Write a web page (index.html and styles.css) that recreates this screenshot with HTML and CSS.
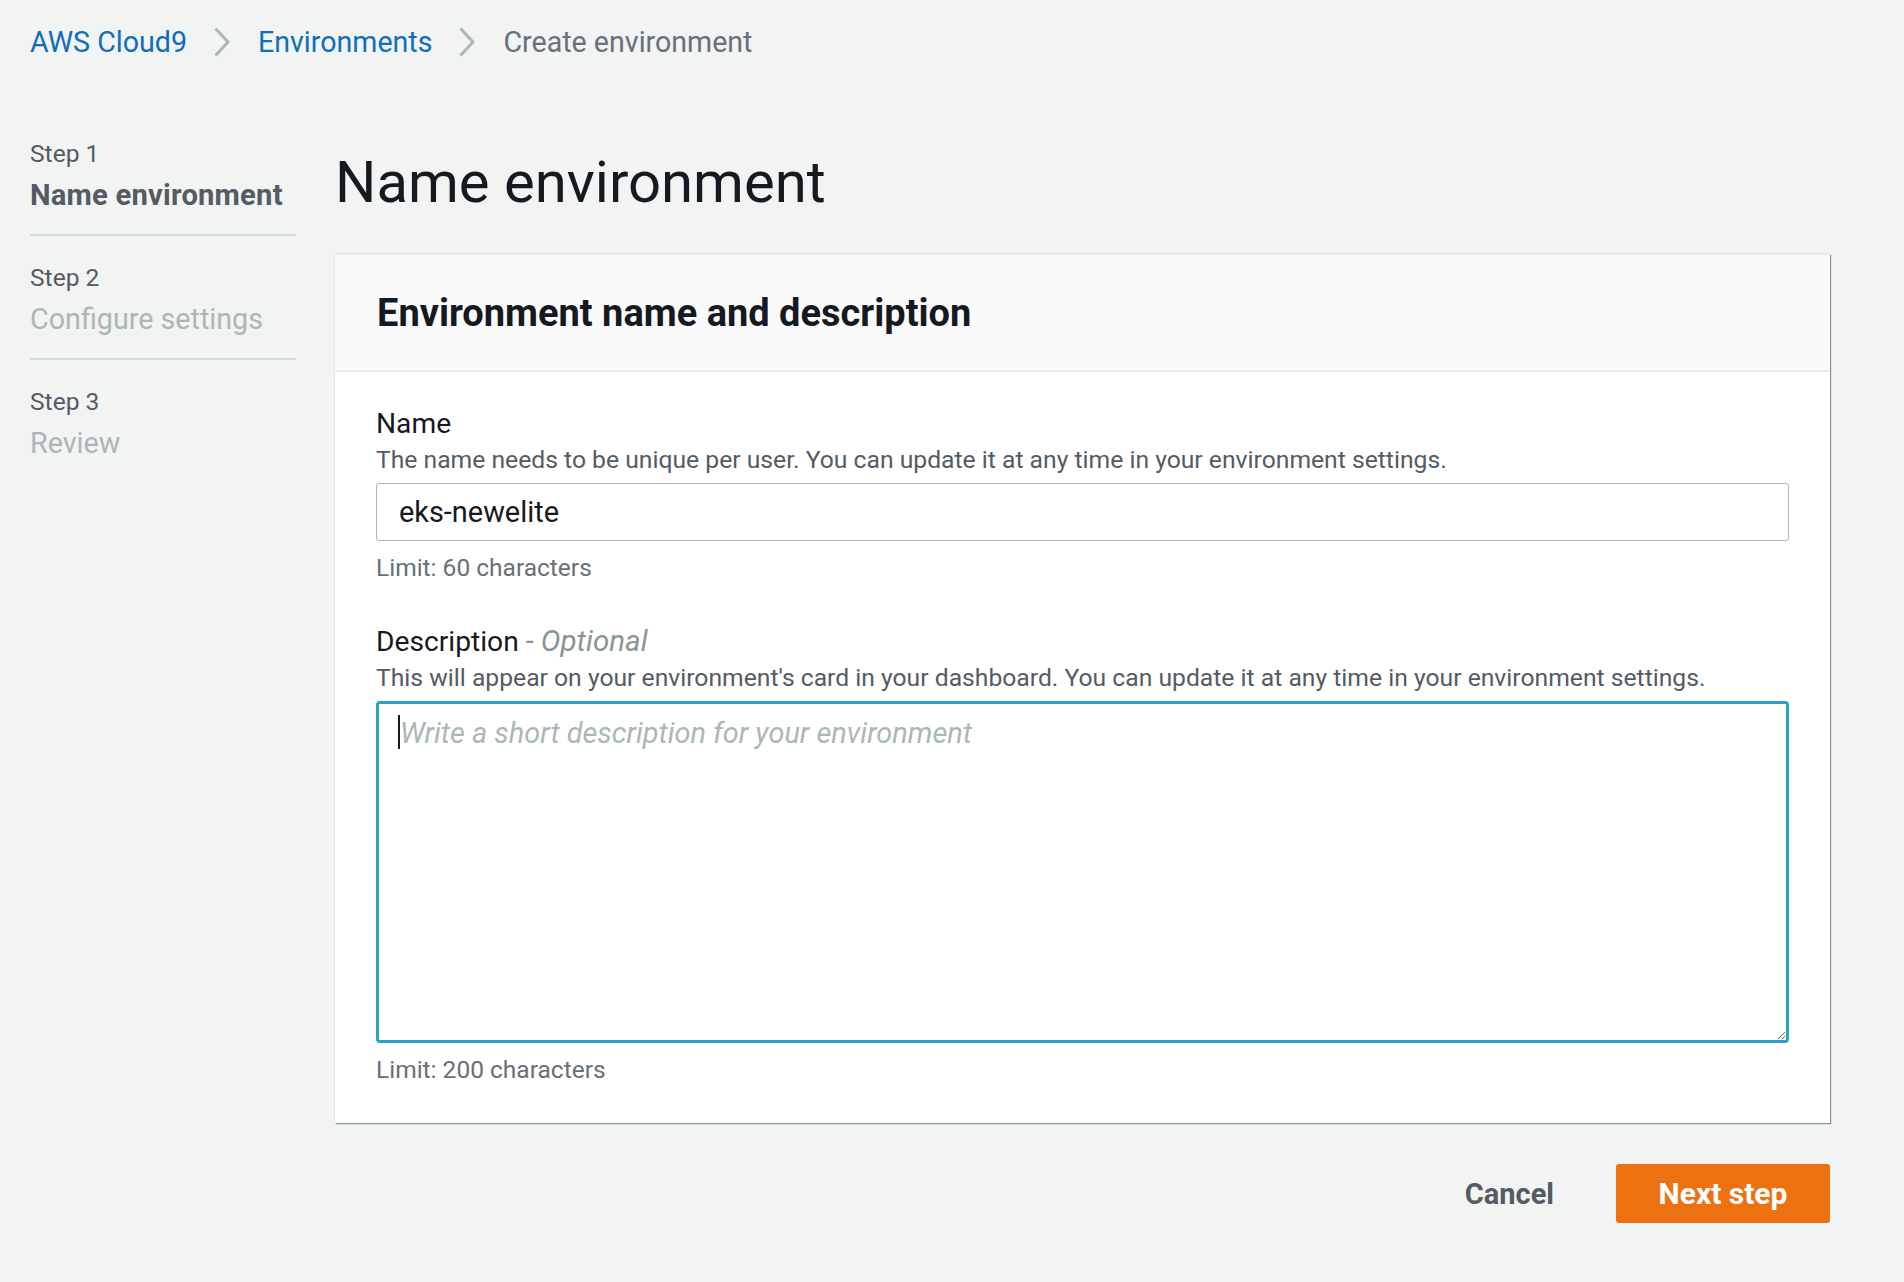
FILE: index.html
```html
<!DOCTYPE html>
<html lang="en">
<head>
<meta charset="utf-8">
<title>Create environment</title>
<link rel="stylesheet" href="styles.css">
</head>
<body>
<nav class="crumbs">
  <a class="crumb-link" href="#">AWS Cloud9</a>
  <svg class="chev" viewBox="0 0 18 30" width="18" height="30"><path d="M2.5 1.5 L15 15 L2.5 28.5" fill="none" stroke="#aab7b8" stroke-width="3"/></svg>
  <a class="crumb-link" href="#">Environments</a>
  <svg class="chev" viewBox="0 0 18 30" width="18" height="30"><path d="M2.5 1.5 L15 15 L2.5 28.5" fill="none" stroke="#aab7b8" stroke-width="3"/></svg>
  <span class="crumb-current">Create environment</span>
</nav>
<div class="layout">
  <aside class="steps">
    <div class="step">
      <div class="step-num">Step 1</div>
      <div class="step-name active">Name environment</div>
    </div>
    <div class="step">
      <div class="step-num">Step 2</div>
      <div class="step-name">Configure settings</div>
    </div>
    <div class="step last">
      <div class="step-num">Step 3</div>
      <div class="step-name">Review</div>
    </div>
  </aside>
  <main class="main">
    <h1 class="title">Name environment</h1>
    <section class="card">
      <div class="card-head">
        <h2 class="card-title">Environment name and description</h2>
      </div>
      <div class="card-body">
        <div class="field">
          <div class="label">Name</div>
          <div class="help">The name needs to be unique per user. You can update it at any time in your environment settings.</div>
          <input class="input" type="text" value="eks-newelite">
          <div class="hint">Limit: 60 characters</div>
        </div>
        <div class="field">
          <div class="label">Description <span class="optional">- Optional</span></div>
          <div class="help">This will appear on your environment's card in your dashboard. You can update it at any time in your environment settings.</div>
          <div class="ta-wrap">
            <textarea class="textarea" placeholder="Write a short description for your environment"></textarea>
            <span class="caret"></span>
          </div>
          <div class="hint">Limit: 200 characters</div>
        </div>
      </div>
    </section>
    <div class="actions">
      <button class="btn-link" type="button">Cancel</button>
      <button class="btn-primary" type="button">Next step</button>
    </div>
  </main>
</div>
</body>
</html>
```
FILE: styles.css
```css
* { box-sizing: border-box; }
html, body { margin: 0; padding: 0; }
body {
  background: #f2f3f3;
  font-family: Roboto, "Liberation Sans", sans-serif;
  color: #16191f;
  width: 1904px;
  height: 1282px;
  overflow: hidden;
}
.crumbs {
  display: flex;
  align-items: center;
  height: 86px;
  padding-left: 30px;
  padding-bottom: 2px;
  font-size: 28.6px;
}
.crumb-link { color: #0f6fba; text-decoration: none; }
.crumb-current { color: #687078; }
.chev { margin: 0 27px 0 26px; }
.layout {
  display: flex;
  padding-left: 30px;
}
.steps {
  width: 266px;
  flex: none;
  padding-top: 47px;
}
.step {
  border-bottom: 2px solid #d5dbdb;
  padding: 2px 0 17px;
  margin-bottom: 21px;
}
.step.last { border-bottom: none; }
.step-num { color: #545b64; font-size: 24.6px; line-height: 38px; }
.step-name { color: #aab7b8; font-size: 28.7px; line-height: 44px; white-space: nowrap; }
.step-name.active { color: #545b64; font-weight: 700; font-size: 29.2px; letter-spacing: 0.2px; }
.main {
  margin-left: 39px;
  width: 1495px;
}
.title {
  margin: 0;
  font-weight: 400;
  font-size: 58px;
  line-height: 80px;
  padding-top: 56px;
  padding-left: 0;
  height: 168px;
  color: #16191f;
}
.card {
  background: #fff;
  border-top: 1px solid #e9ebed;
  box-shadow: 1px 1px 1px 0 #879596, 0 0 1px 0 rgba(0,28,36,0.25);
}
.card-head {
  background: #fafafa;
  border-bottom: 2px solid #eaeded;
  height: 117px;
  display: flex;
  align-items: center;
  padding-left: 42px;
}
.card-title {
  margin: 0;
  font-size: 38px;
  font-weight: 700;
  color: #16191f;
}
.card-body {
  padding: 34px 41px 37px 41px;
}
.field + .field { margin-top: 39px; }
.label { font-size: 28.2px; line-height: 36px; color: #16191f; }
.optional { color: #879596; font-style: italic; font-size: 29.5px; }
.help { font-size: 24.7px; line-height: 35px; color: #545b64; margin-bottom: 6px; }
.input {
  display: block;
  width: 100%;
  height: 58px;
  border: 1px solid #aab7b8;
  border-radius: 3px;
  padding: 0 22px;
  font-family: inherit;
  font-size: 28.9px;
  color: #16191f;
  background: #fff;
  outline: none;
}
.hint { font-size: 24.5px; line-height: 32px; color: #687078; margin-top: 11px; }
.ta-wrap { position: relative; }
.textarea {
  display: block;
  width: 100%;
  height: 342px;
  border: 3px solid #2ea1c8;
  border-radius: 4px;
  padding: 11px 21px;
  font-family: inherit;
  font-size: 28.9px;
  line-height: 36px;
  color: #16191f;
  background: #fff;
  outline: none;
  resize: vertical;
}
.textarea::placeholder { color: #aab7b8; font-style: italic; }
.caret {
  position: absolute;
  left: 22px;
  top: 14px;
  width: 2px;
  height: 34px;
  background: #16191f;
}
.actions {
  display: flex;
  justify-content: flex-end;
  align-items: center;
  margin-top: 41px;
}
.btn-link {
  border: none;
  background: none;
  font-family: inherit;
  font-size: 29px;
  font-weight: 700;
  color: #545b64;
  padding: 0;
  margin-right: 62px;
}
.btn-primary {
  width: 214px;
  height: 59px;
  border: none;
  border-radius: 3px;
  background: #ec7211;
  color: #fff;
  font-family: inherit;
  font-size: 30px;
  font-weight: 700;
}
```
